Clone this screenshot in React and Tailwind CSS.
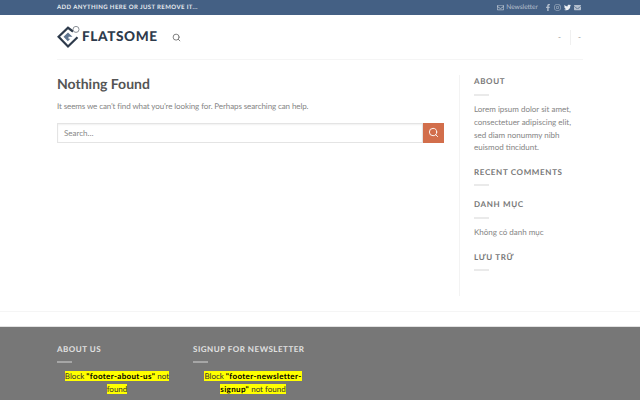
import React from "react";
import { Search } from "lucide-react";
import { FaFacebookF, FaInstagram, FaTwitter, FaEnvelope, FaRegEnvelope } from "react-icons/fa";

const Divider = ({ className = "bg-[#e3e3e3]" }) => (
  <div className={`w-[15px] h-[2px] ${className}`} />
);

const WidgetTitle = ({ children }) => (
  <h3 className="text-[8px] leading-[12px] font-bold tracking-[0.65px] text-[#777] uppercase">
    {children}
  </h3>
);

const Logo = () => (
  <svg width="23" height="23" viewBox="0 0 23 23" fill="none">
    <path d="M16 5.5 L11 1.8 L1.6 10.8 L11 20.5 L20.5 11.2" stroke="#2d3a4b" strokeWidth="2.2" fill="none" />
    <path d="M6.5 10.8 L11 6.4 L15.5 10.8 L11.5 10.8 L11.5 12.8 L13.3 12.8 L10.8 15.2 Z" fill="#5f7590" />
    <circle cx="19" cy="3.4" r="3" stroke="#8a8f96" strokeWidth="1" fill="#fff" />
  </svg>
);

const App = () => {
  return (
    <div className="w-[640px] h-[400px] overflow-hidden bg-white font-['Lato',sans-serif] text-[#858585] [text-rendering:geometricPrecision]">
      {/* Top bar */}
      <div className="h-[15px] bg-[#446084]">
        <div className="w-[526px] mx-auto h-full flex items-center justify-between">
          <span className="text-[6px] font-bold tracking-[0.4px] text-[#e6eaef] uppercase">
            Add anything here or just remove it...
          </span>
          <div className="flex items-center text-white/60">
            <FaRegEnvelope className="w-[7px] h-[7px]" />
            <span className="ml-[2px] text-[6.6px] mr-[7px]">Newsletter</span>
            <div className="flex items-center gap-[3px] pr-[2px]">
              <FaFacebookF className="w-[6px] h-[7px]" />
              <FaInstagram className="w-[7px] h-[7px]" />
              <FaTwitter className="w-[7px] h-[7px] text-white/90" />
              <FaEnvelope className="w-[7px] h-[7px]" />
            </div>
          </div>
        </div>
      </div>

      {/* Header */}
      <div className="w-[526px] mx-auto h-[45px] border-b border-[#f5f5f5] flex items-center">
        <Logo />
        <span className="ml-[2px] text-[13.6px] leading-none font-black tracking-[0.6px] text-[#2d3a4b]">
          FLATSOME
        </span>
        <Search className="ml-[14px] w-[9px] h-[9px] text-[#777]" strokeWidth={2.5} />
        <div className="ml-auto flex items-center text-[8px] text-[#999]">
          <span className="mr-[9px]">-</span>
          <div className="w-px h-[15px] bg-[#f0f0f0]" />
          <span className="ml-[7px] mr-[2px]">-</span>
        </div>
      </div>

      {/* Main */}
      <div className="w-[526px] mx-auto pt-[15px] flex">
        <div className="w-[387px]">
          <h1 className="text-[14px] leading-[18px] font-bold text-[#555]">Nothing Found</h1>
          <p className="mt-[7px] text-[8px] tracking-[-0.1px] leading-[12.8px]">
            It seems we can’t find what you’re looking for. Perhaps searching can help.
          </p>
          <div className="mt-[10px] flex h-[20px]">
            <div className="flex-1 border border-[#e4e4e4] shadow-[inset_0_1px_2px_rgba(0,0,0,0.06)] pl-[6px] text-[8px] leading-[18px] text-[#888]">
              Search…
            </div>
            <div className="w-[21px] bg-[#d26e4b] flex items-center justify-center">
              <Search className="w-[11px] h-[11px] text-white" strokeWidth={2} />
            </div>
          </div>
        </div>
        <aside className="ml-[15px] pl-[14px] w-[124px] h-[221px] border-l border-[#f3f3f3]">
          <WidgetTitle>About</WidgetTitle>
          <Divider className="mt-[7px] bg-[#eaeaea]" />
          <p className="mt-[7px] w-[98px] text-[8px] leading-[12.8px]">
            Lorem ipsum dolor sit amet, consectetuer adipiscing elit, sed diam nonummy nibh euismod tincidunt.
          </p>
          <div className="mt-[12px]">
            <WidgetTitle>Recent Comments</WidgetTitle>
            <Divider className="mt-[6px] bg-[#eaeaea]" />
          </div>
          <div className="mt-[12px]">
            <WidgetTitle>Danh mục</WidgetTitle>
            <Divider className="mt-[7px] bg-[#eaeaea]" />
          </div>
          <p className="mt-[7px] text-[8px] leading-[12.8px]">Không có danh mục</p>
          <div className="mt-[12px]">
            <WidgetTitle>Lưu trữ</WidgetTitle>
            <Divider className="mt-[6px] bg-[#eaeaea]" />
          </div>
        </aside>
      </div>

      {/* Footer */}
      <div className="mt-[15px] border-t border-[#f5f5f5] h-[15px]" />
      <div className="border-t border-[#e2e2e2] bg-[#777] h-[74px] overflow-hidden">
        <div className="w-[526px] mx-auto pt-[16px] flex gap-[16px]">
          <div className="w-[120px]">
            <h3 className="text-[8px] leading-[12px] font-bold tracking-[0.5px] text-[#e2e2e2] uppercase">About us</h3>
            <Divider className="mt-[6px] bg-[#a6a6a6]" />
            <p className="mt-[7px] text-center text-[8px] leading-[13px] text-[#333]">
              <span className="bg-[#ffff00]">Block <b className="text-black tracking-[0.35px]">"footer-about-us"</b> not found</span>
            </p>
          </div>
          <div className="w-[120px]">
            <h3 className="text-[8px] leading-[12px] font-bold tracking-[0.5px] text-[#e2e2e2] uppercase whitespace-nowrap">Signup for newsletter</h3>
            <Divider className="mt-[6px] bg-[#a6a6a6]" />
            <p className="mt-[7px] text-center text-[8px] leading-[13px] text-[#333]">
              <span className="bg-[#ffff00]">Block <b className="text-black tracking-[0.35px]">"footer-newsletter-signup"</b> not found</span>
            </p>
          </div>
        </div>
      </div>
    </div>
  );
};

export default App;
